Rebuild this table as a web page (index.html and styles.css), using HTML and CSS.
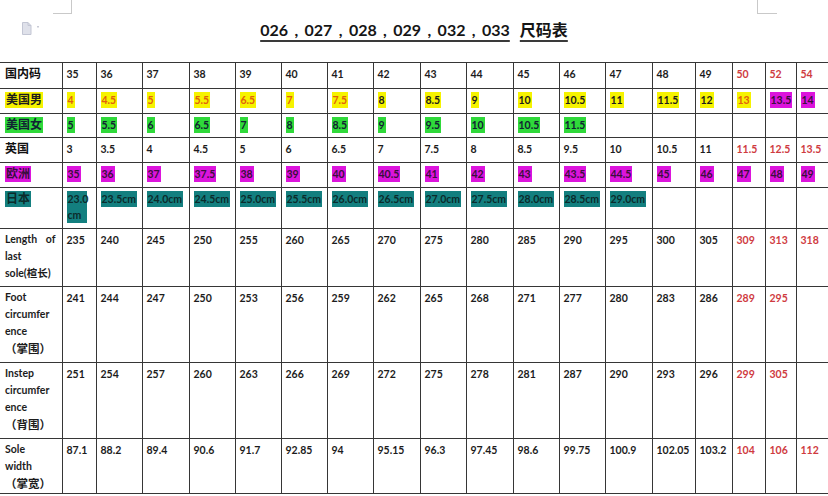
FILE: index.html
```html
<!DOCTYPE html>
<html lang="zh">
<head>
<meta charset="utf-8">
<title>尺码表</title>
<link rel="stylesheet" href="styles.css">
</head>
<body>
<div class="page">
  <span class="crop crop-left"></span>
  <span class="crop crop-right"></span>
  <svg class="toolbar-icon" width="20" height="13" viewBox="0 0 20 13">
    <path d="M1.5 0.5h5.5l3 3v9H1.5z" fill="#dfe1ea" stroke="#c3c6d4" stroke-width="1"/>
    <path d="M7 0.5v3h3" fill="none" stroke="#c3c6d4" stroke-width="1"/>
    <rect x="16" y="4" width="2" height="1.5" fill="#c9cbd6"/>
  </svg>
  <header class="title-bar">
    <h1 class="title">026 , 027 , 028 , 029 , 032 , 033<span class="title-cn">尺码表</span></h1>
  </header>
  <table class="sizes">
    <colgroup>
      <col class="c62"><col class="c34"><col class="c46"><col class="c47"><col class="c46"><col class="c46"><col class="c46"><col class="c46"><col class="c47"><col class="c46"><col class="c47"><col class="c46"><col class="c46"><col class="c47"><col class="c43"><col class="c37"><col class="c33"><col class="c31"><col class="c34">
    </colgroup>
    <tr class="h26">
      <td class="lbl cn">国内码</td>
      <td>35</td><td>36</td><td>37</td><td>38</td><td>39</td><td>40</td><td>41</td><td>42</td><td>43</td><td>44</td><td>45</td><td>46</td><td>47</td><td>48</td><td>49</td><td class="red">50</td><td class="red">52</td><td class="red">54</td>
    </tr>
    <tr class="h25">
      <td class="lbl cn"><span class="hl y">美国男</span></td>
      <td><span class="hl y org">4</span></td><td><span class="hl y org">4.5</span></td><td><span class="hl y org">5</span></td><td><span class="hl y org">5.5</span></td><td><span class="hl y org">6.5</span></td><td><span class="hl y org">7</span></td><td><span class="hl y org">7.5</span></td><td><span class="hl y">8</span></td><td><span class="hl y">8.5</span></td><td><span class="hl y">9</span></td><td><span class="hl y">10</span></td><td><span class="hl y">10.5</span></td><td><span class="hl y">11</span></td><td><span class="hl y">11.5</span></td><td><span class="hl y">12</span></td><td><span class="hl y org">13</span></td><td><span class="hl m">13.5</span></td><td><span class="hl m">14</span></td>
    </tr>
    <tr class="h24">
      <td class="lbl cn"><span class="hl g">美国女</span></td>
      <td><span class="hl g">5</span></td><td><span class="hl g">5.5</span></td><td><span class="hl g">6</span></td><td><span class="hl g">6.5</span></td><td><span class="hl g">7</span></td><td><span class="hl g">8</span></td><td><span class="hl g">8.5</span></td><td><span class="hl g">9</span></td><td><span class="hl g">9.5</span></td><td><span class="hl g">10</span></td><td><span class="hl g">10.5</span></td><td><span class="hl g">11.5</span></td><td></td><td></td><td></td><td></td><td></td><td></td>
    </tr>
    <tr class="h25">
      <td class="lbl cn">英国</td>
      <td>3</td><td>3.5</td><td>4</td><td>4.5</td><td>5</td><td>6</td><td>6.5</td><td>7</td><td>7.5</td><td>8</td><td>8.5</td><td>9.5</td><td>10</td><td>10.5</td><td>11</td><td class="red">11.5</td><td class="red">12.5</td><td class="red">13.5</td>
    </tr>
    <tr class="h25">
      <td class="lbl cn"><span class="hl m">欧洲</span></td>
      <td><span class="hl m">35</span></td><td><span class="hl m">36</span></td><td><span class="hl m">37</span></td><td><span class="hl m">37.5</span></td><td><span class="hl m">38</span></td><td><span class="hl m">39</span></td><td><span class="hl m">40</span></td><td><span class="hl m">40.5</span></td><td><span class="hl m">41</span></td><td><span class="hl m">42</span></td><td><span class="hl m">43</span></td><td><span class="hl m">43.5</span></td><td><span class="hl m">44.5</span></td><td><span class="hl m">45</span></td><td><span class="hl m">46</span></td><td><span class="hl m">47</span></td><td><span class="hl m">48</span></td><td><span class="hl m">49</span></td>
    </tr>
    <tr class="h41">
      <td class="lbl cn"><span class="hl t">日本</span></td>
      <td><span class="hl t block">23.0</span><span class="hl t block">cm</span></td><td><span class="hl t">23.5cm</span></td><td><span class="hl t">24.0cm</span></td><td><span class="hl t">24.5cm</span></td><td><span class="hl t">25.0cm</span></td><td><span class="hl t">25.5cm</span></td><td><span class="hl t">26.0cm</span></td><td><span class="hl t">26.5cm</span></td><td><span class="hl t">27.0cm</span></td><td><span class="hl t">27.5cm</span></td><td><span class="hl t">28.0cm</span></td><td><span class="hl t">28.5cm</span></td><td><span class="hl t">29.0cm</span></td><td></td><td></td><td></td><td></td><td></td>
    </tr>
    <tr class="h58">
      <td class="lbl en"><span class="spread"><span>Length</span><span>of</span></span>last<br>sole(楦长)</td>
      <td>235</td><td>240</td><td>245</td><td>250</td><td>255</td><td>260</td><td>265</td><td>270</td><td>275</td><td>280</td><td>285</td><td>290</td><td>295</td><td>300</td><td>305</td><td class="red">309</td><td class="red">313</td><td class="red">318</td>
    </tr>
    <tr class="h76">
      <td class="lbl en">Foot<br>circumfer<br>ence<br><span class="cn-inline">（掌围）</span></td>
      <td>241</td><td>244</td><td>247</td><td>250</td><td>253</td><td>256</td><td>259</td><td>262</td><td>265</td><td>268</td><td>271</td><td>277</td><td>280</td><td>283</td><td>286</td><td class="red">289</td><td class="red">295</td><td></td>
    </tr>
    <tr class="h76">
      <td class="lbl en">Instep<br>circumfer<br>ence<br><span class="cn-inline">（背围）</span></td>
      <td>251</td><td>254</td><td>257</td><td>260</td><td>263</td><td>266</td><td>269</td><td>272</td><td>275</td><td>278</td><td>281</td><td>287</td><td>290</td><td>293</td><td>296</td><td class="red">299</td><td class="red">305</td><td></td>
    </tr>
    <tr class="h55">
      <td class="lbl en">Sole<br>width<br><span class="cn-inline">（掌宽）</span></td>
      <td>87.1</td><td>88.2</td><td>89.4</td><td>90.6</td><td>91.7</td><td>92.85</td><td>94</td><td>95.15</td><td>96.3</td><td>97.45</td><td>98.6</td><td>99.75</td><td>100.9</td><td>102.05</td><td>103.2</td><td class="red">104</td><td class="red">106</td><td class="red">112</td>
    </tr>
  </table>
</div>
</body>
</html>
```
FILE: styles.css
```css
* { box-sizing: border-box; }
html, body { margin: 0; padding: 0; background: #fff; }

.page {
  position: relative;
  width: 828px;
  height: 496px;
  overflow: hidden;
  font-family: Lato, "Noto Sans CJK SC", sans-serif;
  color: #1c1c1c;
}

/* page corner marks of the document view */
.crop {
  position: absolute;
  top: 0;
  height: 14px;
  border-style: solid;
  border-color: #c9c9c9;
}
.crop-left { left: 53px; width: 19px; border-width: 0 1px 1px 0; }
.crop-right { left: 757px; width: 20px; border-width: 0 0 1px 1px; }

.toolbar-icon { position: absolute; left: 21px; top: 22px; }

.title-bar {
  height: 62px;
  padding-top: 20px;
  text-align: center;
}
.title {
  display: inline-block;
  margin: 0;
  font: 700 16px/20px Lato, "Noto Sans CJK SC", sans-serif;
  word-spacing: 2.5px;
  color: #151515;
  text-decoration: underline;
  text-decoration-thickness: 1.5px;
  text-underline-offset: 4px;
  text-decoration-color: #3a3a3a;
}
.title-cn { margin-left: 10px; }

.sizes {
  border-collapse: collapse;
  table-layout: fixed;
  width: 830px;
}
.c62 { width: 62px; } .c34 { width: 34px; } .c46 { width: 46px; } .c47 { width: 47px; }
.c43 { width: 43px; } .c37 { width: 37px; } .c33 { width: 33px; } .c31 { width: 31px; }

.h26 { height: 26px; } .h25 { height: 25px; } .h24 { height: 24px; } .h41 { height: 41px; }
.h58 { height: 58px; } .h76 { height: 76px; } .h55 { height: 55px; }

.sizes td {
  border-right: 1px solid #363636;
  border-bottom: 1px solid #363636;
  padding: 3px 0 0 4px;
  vertical-align: top;
  font: 700 10.5px/16px Lato, "Noto Sans CJK SC", sans-serif;
  color: #1c1c1c;
  white-space: nowrap;
  overflow: hidden;
}
.sizes tr:first-child td { border-top: 1px solid #363636; }

.sizes td.lbl { padding-left: 5px; }
.sizes td.cn { font-size: 12px; font-weight: 700; color: #111; }
.sizes td.en { line-height: 17px; padding-top: 2px; padding-right: 6px; }
.spread { display: flex; justify-content: space-between; }
.cn-inline { font-size: 11.5px; font-weight: 700; }

.red { color: #cf3b3f !important; }
.hl { display: inline-block; padding: 0 1px; line-height: 16px; }
.hl.block { display: block; width: 20px; }
.y { background: #f6f300; color: #1c1c1c; }
.org { color: #e2600c; }
.g { background: #2fd93a; color: #123; }
.m { background: #dc14dc; color: #3a0f3d; }
.t { background: #137f7f; color: #0b2b2b; }
```
